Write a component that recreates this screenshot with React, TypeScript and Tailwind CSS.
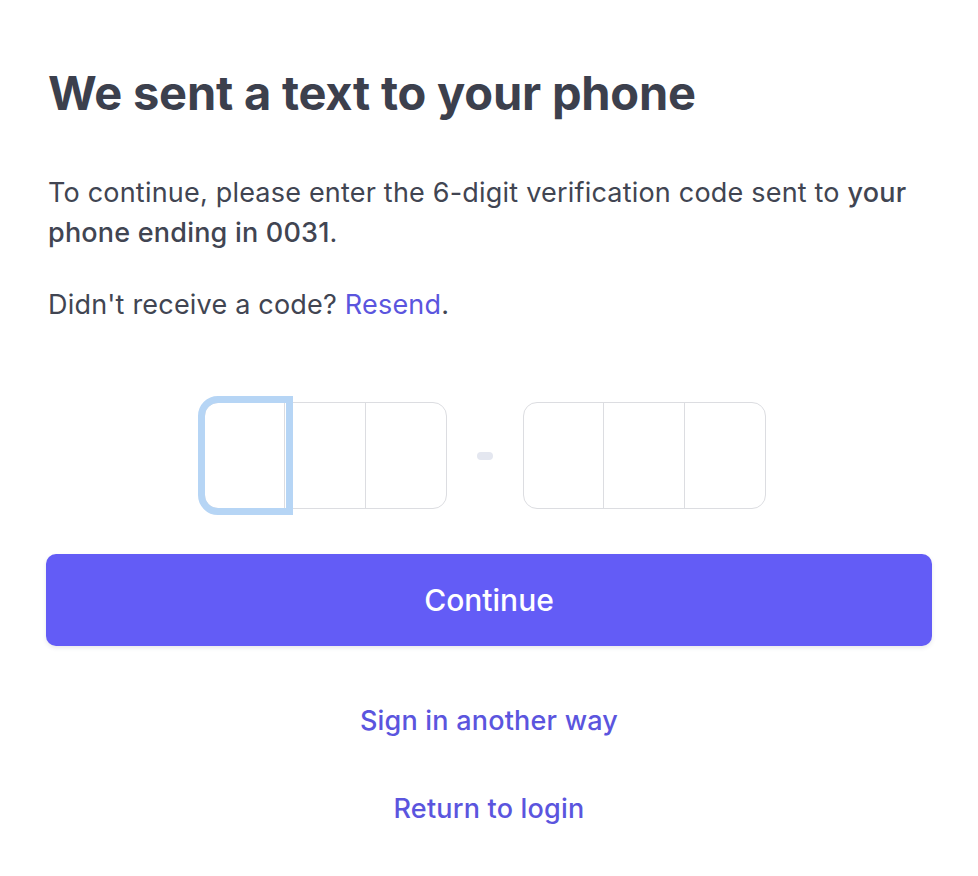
import { useState } from "react";

function CodeGroup({ focusFirst }: { focusFirst?: boolean }) {
  return (
    <div className="relative flex h-[107px] w-[243px] rounded-[14px] border border-[#dcdde1]">
      {[0, 1, 2].map((i) => (
        <div
          key={i}
          className={
            "flex-1 " + (i > 0 ? "border-l border-[#dcdde1]" : "")
          }
        />
      ))}
      {focusFirst && (
        // focus ring over the first cell
        <div className="pointer-events-none absolute -top-[7px] -bottom-[7px] -left-[7px] w-[95px] rounded-l-[20px] border-[7px] border-[#b6d5f5]" />
      )}
    </div>
  );
}

export default function App() {
  const [code] = useState("");

  return (
    <div className="min-h-[876px] w-[978px] bg-white font-['Inter',sans-serif] text-[#414552]">
      <div className="px-[48px] pt-[65px]">
        <h1 className="text-[47px] font-bold leading-[56px] tracking-[-0.2px] text-[#3c404d]">
          We sent a text to your phone
        </h1>

        <p className="mt-[52px] text-[27px] leading-[40px] tracking-[0.2px]">
          To continue, please enter the 6-digit verification code sent to{" "}
          <span className="font-medium">your phone ending in 0031</span>.
        </p>

        <p className="mt-[32px] text-[27px] leading-[40px] tracking-[0.2px]">
          Didn't receive a code?{" "}
          <a href="#" className="text-[#5b55de]">
            Resend
          </a>
          .
        </p>
      </div>

      <div className="mt-[77px] flex items-center justify-center gap-[30px] pr-[9px]" data-code={code}>
        <CodeGroup focusFirst />
        <div className="h-[8px] w-[16px] rounded-full bg-[#e4e7f0]" />
        <CodeGroup />
      </div>

      <div className="px-[46px] pt-[45px]">
        <button className="flex h-[92px] w-full items-center justify-center rounded-[10px] bg-[#635cf6] text-[30px] font-medium text-white shadow-[0_2px_4px_rgba(60,66,87,0.12)]">
          Continue
        </button>
      </div>

      <div className="mt-[55px] flex flex-col items-center gap-[48px] text-[27px] font-medium leading-[40px] tracking-[0.2px] text-[#5b55de]">
        <a href="#">Sign in another way</a>
        <a href="#">Return to login</a>
      </div>
    </div>
  );
}
